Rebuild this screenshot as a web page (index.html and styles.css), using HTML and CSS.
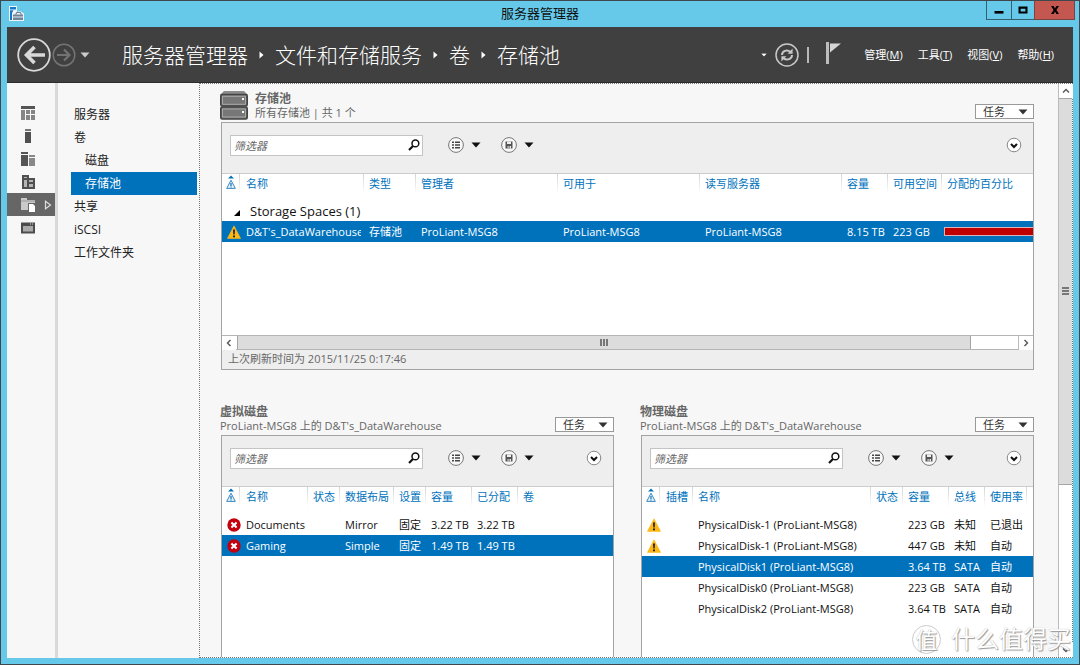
FILE: index.html
```html
<!DOCTYPE html>
<html lang="zh-CN">
<head>
<meta charset="utf-8">
<title>服务器管理器</title>
<link rel="stylesheet" href="styles.css">
</head>
<body>
<svg class="defs" aria-hidden="true">
  <symbol id="warn" viewBox="0 0 14 14"><path d="M7 .8 13.6 13.4H.4z" fill="#fdb813" stroke="#fdb813" stroke-width=".6" stroke-linejoin="round"/><path d="M6 4.6h2L7.7 9.6H6.3zM6 10.400h2V12.200H6z" fill="#222"/></symbol>
  <symbol id="error" viewBox="0 0 14 14"><circle cx="7" cy="7" r="6.7" fill="#c4000f"/><path d="M4.4 4.4l5.2 5.2M9.6 4.4L4.4 9.6" stroke="#fff" stroke-width="2.1"/></symbol>
  <symbol id="sortwarn" viewBox="0 0 12 16"><path d="M3 3.4 6 .4l3 3z" fill="#0072bc"/><path d="M6 5.2 10.3 13.4H1.7z" fill="#e8f2fa" stroke="#3b87bf"/><path d="M6 8v3M6 11.6v1" stroke="#0072bc" stroke-width="1.2"/></symbol>
  <symbol id="search" viewBox="0 0 12 12"><circle cx="7.4" cy="4.4" r="3.4" fill="none" stroke="#111" stroke-width="1.5"/><path d="M5 7 1 11" stroke="#111" stroke-width="2.2"/></symbol>
  <symbol id="list" viewBox="0 0 16 16"><circle cx="8" cy="8" r="7.4" fill="#f8f8f8" stroke="#777"/><path d="M4 5.300h2M4 8h2M4 10.700h2M7 5.300h5M7 8h5M7 10.700h5" stroke="#444" stroke-width="1.400"/></symbol>
  <symbol id="save" viewBox="0 0 16 16"><circle cx="8" cy="8" r="7.4" fill="#f8f8f8" stroke="#777"/><path d="M4.5 4.5h7v7h-7z" fill="#555"/><path d="M6 4.5h4v2.6H6zM6.6 9h1v2.5h-1zM8.6 9H10v2.5H8.6z" fill="#eee"/></symbol>
  <symbol id="expand" viewBox="0 0 16 16"><circle cx="8" cy="8" r="6.8" fill="#fff" stroke="#888"/><path d="M5 7l3 3 3-3" fill="none" stroke="#111" stroke-width="2"/></symbol>
  <symbol id="down" viewBox="0 0 10 6"><path d="M.5.5h9L5 5.5z" fill="currentColor"/></symbol>
  <symbol id="chev" viewBox="0 0 8 8"><path d="M5.5 1 2.5 4l3 3" fill="none" stroke="#555" stroke-width="1.4"/></symbol>
</svg>
<div class="window">
  <header class="titlebar">
    <svg class="app-icon" viewBox="0 0 15 15"><path d="M0 0h8v5.500l3-.5 4 2.500V15H0z" fill="#eef6fa"/><path d="M1 1h6v2.400H1zM1 4.300h3.500L3 7v7H1z" fill="#1a78c8"/><path d="M4 8.500h10V14H4z" fill="#71859a"/><path d="M6.500 8.500 8 6.300h3l1.500 2.200" fill="none" stroke="#71859a" stroke-width="1.200"/><path d="M4 11h10" stroke="#dfe6ee"/></svg>
    <h1 class="title">服务器管理器</h1>
    <div class="win-buttons">
      <button class="win-btn" aria-label="最小化"><svg viewBox="0 0 10 10"><path d="M.5 6h9v2.600h-9z"/></svg></button>
      <button class="win-btn max" aria-label="最大化"><svg viewBox="0 0 10 10"><path d="M.5 1.500h9v7h-9zM2.600 3.800v2.600h4.800V3.800z" fill-rule="evenodd"/></svg></button>
      <button class="win-btn close" aria-label="关闭"><svg viewBox="0 0 10 10"><path d="M1 1h2.600L5 3.400 6.400 1H9L6.400 5 9 9H6.400L5 6.600 3.600 9H1l2.600-4z"/></svg></button>
    </div>
  </header>
  <div class="frame">
    <div class="navbar">
      <button class="plain" aria-label="后退"><svg class="back" viewBox="0 0 34 34"><circle cx="17" cy="17" r="15.800" fill="none" stroke="#d8d8d8" stroke-width="1.800"/><path d="M28 17H9M17.500 9 9.500 17l8 8" fill="none" stroke="#d8d8d8" stroke-width="3.600"/></svg></button>
      <button class="plain" aria-label="前进"><svg class="forward" viewBox="0 0 24 24"><circle cx="12" cy="12" r="10.800" fill="none" stroke="#737373" stroke-width="1.500"/><path d="M5 12h12M12 6.500l5.500 5.500-5.500 5.500" fill="none" stroke="#737373" stroke-width="2.200"/></svg></button>
      <button class="plain history" aria-label="历史记录"><svg class="tri" viewBox="0 0 10 6"><use href="#down"/></svg></button>
      <nav class="crumbs">
        <a href="#">服务器管理器</a><svg viewBox="0 0 5 8"><path d="M.5.5 4.500 4l-4 3.500z"/></svg><a href="#">文件和存储服务</a><svg viewBox="0 0 5 8"><path d="M.5.5 4.500 4l-4 3.500z"/></svg><a href="#">卷</a><svg viewBox="0 0 5 8"><path d="M.5.5 4.500 4l-4 3.500z"/></svg><a href="#">存储池</a>
      </nav>
      <div class="actions">
        <button class="plain" aria-label="更多"><svg class="tri-small" viewBox="0 0 10 6"><use href="#down"/></svg></button>
        <button class="plain" aria-label="刷新"><svg class="refresh" viewBox="0 0 24 24"><circle cx="12" cy="12" r="11" fill="none" stroke="#c8c8c8" stroke-width="1.500"/><path d="M7 12c0-4 5-6 8.500-3.200M17 12c0 4-5 6-8.500 3.200" fill="none" stroke="#c8c8c8" stroke-width="2"/><path d="M17.600 5.500v5.300h-5zM6.400 18.500v-5.300h5z" fill="#c8c8c8"/></svg></button>
        <span class="bar"></span>
        <button class="plain" aria-label="通知"><svg class="flag" viewBox="0 0 16 22"><path d="M1 0h3v22H1z" fill="#bdbdbd"/><path d="M5 1.500h11L5 10.500z" fill="#d5d5d5"/></svg></button>
      </div>
      <div class="menus">
        <button class="plain menu">管理(<u>M</u>)</button>
        <button class="plain menu">工具(<u>T</u>)</button>
        <button class="plain menu">视图(<u>V</u>)</button>
        <button class="plain menu">帮助(<u>H</u>)</button>
      </div>
    </div>
    <div class="body">
      <nav class="rail" aria-label="服务器角色">
        <a href="#" aria-label="仪表板"><svg viewBox="0 0 16 16"><path d="M1 1h14v3H1z" fill="#555"/><path d="M1 5h4v10H1zM6 5h4v4H6zM11 5h4v4h-4zM6 10h4v5H6zM11 10h4v5h-4z" fill="#858585"/></svg></a>
        <a href="#" aria-label="本地服务器"><svg viewBox="0 0 16 16"><path d="M5 1h6v2H5z" fill="#777"/><path d="M5 4h6v11H5z" fill="#505050"/></svg></a>
        <a href="#" aria-label="所有服务器"><svg viewBox="0 0 16 16"><path d="M1 1h7v2H1zM1 4h7v11H1z" fill="#555"/><path d="M9 4h6v2H9zM9 7h6v8H9z" fill="#888"/></svg></a>
        <a href="#" aria-label="AD DS"><svg viewBox="0 0 16 16"><path d="M2 1h7v3h6v11H2z" fill="#505050"/><path d="M4 3h3v1H4zM4 6h3v7H4zM9 6h4v2H9zM9 10h4v3H9z" fill="#b5b5b5"/></svg></a>
        <a href="#" class="on" aria-label="文件和存储服务"><svg viewBox="0 0 16 16"><path d="M1 1h6v2h8v3H8v7H1z" fill="#c9c9c9"/><path d="M1 4h14" stroke="#999"/><path d="M9 7h4l2 2v6H9z" fill="#fff"/></svg><svg class="rail-arrow" viewBox="0 0 8 10"><path d="M1.500 1.200 6.500 5l-5 3.800z" fill="none" stroke="#ddd" stroke-width="1.200"/></svg></a>
        <a href="#" aria-label="远程服务"><svg viewBox="0 0 16 16"><path d="M1 2.500h14v11H1z" fill="#4c4c4c"/><path d="M3 6h10v5.500H3z" fill="#aaa"/><path d="M10 4h1M12 4h1" stroke="#ddd"/></svg></a>
      </nav>
      <nav class="side">
        <a href="#">服务器</a>
        <a href="#">卷</a>
        <a href="#" class="sub">磁盘</a>
        <a href="#" class="sub current">存储池</a>
        <a href="#">共享</a>
        <a href="#">iSCSI</a>
        <a href="#">工作文件夹</a>
      </nav>
      <main class="main">
        <div class="tiles">
          <section class="tile wide">
            <div class="tile-head">
              <svg class="pool-icon" viewBox="0 0 28 29"><path d="M4 0h20l4 4H0z" fill="#8c8c8c"/><rect x=".8" y="3.500" width="26.400" height="11.500" rx="1.500" fill="#777" stroke="#444" stroke-width="1.600"/><rect x=".8" y="16" width="26.400" height="12" rx="1.500" fill="#777" stroke="#444" stroke-width="1.600"/><path d="M2.500 5.300h23v8h-23zM2.500 18h23v8h-23z" fill="none" stroke="#a8a8a8"/><path d="M22 7h2v2h-2zM22 20h2v2h-2z" fill="#fff"/></svg>
              <div class="tile-title"><h2>存储池</h2><p>所有存储池 | 共 1 个</p></div>
              <button class="tasks">任务<svg viewBox="0 0 10 6"><use href="#down"/></svg></button>
            </div>
            <div class="panel">
              <div class="tools">
                <label class="filter"><input type="text" placeholder="筛选器" aria-label="筛选器"><svg><use href="#search"/></svg></label>
                <button class="plain tool" aria-label="条件"><svg class="round"><use href="#list"/></svg><svg class="dd"><use href="#down"/></svg></button>
                <button class="plain tool" aria-label="保存查询"><svg class="round"><use href="#save"/></svg><svg class="dd"><use href="#down"/></svg></button>
                <button class="plain expand" aria-label="展开"><svg class="round"><use href="#expand"/></svg></button>
              </div>
              <div class="grid-area pools">
                <table>
                  <colgroup><col class="w18"><col class="w124"><col class="w52"><col class="w142"><col class="w142"><col class="w142"><col class="w46"><col class="w54"><col></colgroup>
                  <thead><tr><th class="ic"><svg class="sort"><use href="#sortwarn"/></svg></th><th>名称</th><th>类型</th><th>管理者</th><th>可用于</th><th>读写服务器</th><th>容量</th><th>可用空间</th><th>分配的百分比</th></tr></thead>
                  <tbody>
                    <tr class="group"><td colspan="9"><svg viewBox="0 0 6 6"><path d="M6 0v6H0z"/></svg>Storage Spaces (1)</td></tr>
                    <tr class="sel"><td class="ic"><svg><use href="#warn"/></svg></td><td><div class="clip">D&amp;T's_DataWarehouse</div></td><td>存储池</td><td>ProLiant-MSG8</td><td>ProLiant-MSG8</td><td>ProLiant-MSG8</td><td>8.15 TB</td><td>223 GB</td><td class="meter-cell"><div class="meter"></div></td></tr>
                  </tbody>
                </table>
              </div>
              <div class="hscroll"><span class="arrow"><svg viewBox="0 0 8 8"><use href="#chev"/></svg></span><div class="htrack"><div class="hthumb"><i></i><i></i><i></i></div></div><span class="arrow right"><svg viewBox="0 0 8 8"><use href="#chev"/></svg></span></div>
              <p class="status">上次刷新时间为 2015/11/25 0:17:46</p>
            </div>
          </section>
          <section class="tile">
            <div class="tile-head">
              <div class="tile-title"><h2>虚拟磁盘</h2><p>ProLiant-MSG8 上的 D&amp;T's_DataWarehouse</p></div>
              <button class="tasks">任务<svg viewBox="0 0 10 6"><use href="#down"/></svg></button>
            </div>
            <div class="panel">
              <div class="tools">
                <label class="filter"><input type="text" placeholder="筛选器" aria-label="筛选器"><svg><use href="#search"/></svg></label>
                <button class="plain tool" aria-label="条件"><svg class="round"><use href="#list"/></svg><svg class="dd"><use href="#down"/></svg></button>
                <button class="plain tool" aria-label="保存查询"><svg class="round"><use href="#save"/></svg><svg class="dd"><use href="#down"/></svg></button>
                <button class="plain expand" aria-label="展开"><svg class="round"><use href="#expand"/></svg></button>
              </div>
              <div class="grid-area">
                <table>
                  <colgroup><col class="w18"><col class="w68"><col class="w32"><col class="w54"><col class="w32"><col class="w46"><col class="w46"><col></colgroup>
                  <thead><tr><th class="ic"><svg class="sort"><use href="#sortwarn"/></svg></th><th>名称</th><th>状态</th><th>数据布局</th><th>设置</th><th>容量</th><th>已分配</th><th>卷</th></tr></thead>
                  <tbody>
                    <tr><td class="ic"><svg><use href="#error"/></svg></td><td>Documents</td><td></td><td>Mirror</td><td>固定</td><td>3.22 TB</td><td>3.22 TB</td><td></td></tr>
                    <tr class="sel"><td class="ic"><svg><use href="#error"/></svg></td><td>Gaming</td><td></td><td>Simple</td><td>固定</td><td>1.49 TB</td><td>1.49 TB</td><td></td></tr>
                  </tbody>
                </table>
              </div>
            </div>
          </section>
          <section class="tile">
            <div class="tile-head">
              <div class="tile-title"><h2>物理磁盘</h2><p>ProLiant-MSG8 上的 D&amp;T's_DataWarehouse</p></div>
              <button class="tasks">任务<svg viewBox="0 0 10 6"><use href="#down"/></svg></button>
            </div>
            <div class="panel">
              <div class="tools">
                <label class="filter"><input type="text" placeholder="筛选器" aria-label="筛选器"><svg><use href="#search"/></svg></label>
                <button class="plain tool" aria-label="条件"><svg class="round"><use href="#list"/></svg><svg class="dd"><use href="#down"/></svg></button>
                <button class="plain tool" aria-label="保存查询"><svg class="round"><use href="#save"/></svg><svg class="dd"><use href="#down"/></svg></button>
                <button class="plain expand" aria-label="展开"><svg class="round"><use href="#expand"/></svg></button>
              </div>
              <div class="grid-area">
                <table>
                  <colgroup><col class="w18"><col class="w33"><col class="w178"><col class="w32"><col class="w46"><col class="w36"><col class="w42"><col></colgroup>
                  <thead><tr><th class="ic"><svg class="sort"><use href="#sortwarn"/></svg></th><th>插槽</th><th>名称</th><th>状态</th><th>容量</th><th>总线</th><th>使用率</th><th></th></tr></thead>
                  <tbody>
                    <tr><td class="ic"><svg><use href="#warn"/></svg></td><td></td><td>PhysicalDisk-1 (ProLiant-MSG8)</td><td></td><td>223 GB</td><td>未知</td><td>已退出</td><td></td></tr>
                    <tr><td class="ic"><svg><use href="#warn"/></svg></td><td></td><td>PhysicalDisk-1 (ProLiant-MSG8)</td><td></td><td>447 GB</td><td>未知</td><td>自动</td><td></td></tr>
                    <tr class="sel"><td></td><td></td><td>PhysicalDisk1 (ProLiant-MSG8)</td><td></td><td>3.64 TB</td><td>SATA</td><td>自动</td><td></td></tr>
                    <tr><td></td><td></td><td>PhysicalDisk0 (ProLiant-MSG8)</td><td></td><td>223 GB</td><td>SATA</td><td>自动</td><td></td></tr>
                    <tr><td></td><td></td><td>PhysicalDisk2 (ProLiant-MSG8)</td><td></td><td>3.64 TB</td><td>SATA</td><td>自动</td><td></td></tr>
                  </tbody>
                </table>
              </div>
            </div>
          </section>
        </div>
        <div class="vscroll"><span class="arrow up"><svg viewBox="0 0 8 8"><use href="#chev"/></svg></span><div class="vtrack"><div class="vthumb"><i></i><i></i><i></i></div></div><span class="arrow dn"><svg viewBox="0 0 8 8"><use href="#chev"/></svg></span></div>
      </main>
    </div>
  </div>
  <div class="watermark"><span class="seal">值</span><span>什么值得买</span></div>
</div>
</body>
</html>
```
FILE: styles.css
```css
* { box-sizing: border-box; }
body {
  margin: 0;
  font: 11px/15px "Open Sans", "Noto Sans CJK SC", sans-serif;
  color: #111;
}
h1, h2, p { margin: 0; }
a { color: inherit; text-decoration: none; }
button, input { font: inherit; color: inherit; }
svg { display: block; flex: none; }
.defs { position: absolute; width: 0; height: 0; }
.plain { border: 0; background: none; padding: 0; display: flex; align-items: center; }

.window {
  position: relative;
  display: flex;
  flex-direction: column;
  height: 100vh;
  padding: 0 6px 6px;
  background: #66c9ea;
  border: 1px solid #40484e;
  overflow: hidden;
}
.titlebar {
  display: grid;
  grid-template-columns: 1fr auto 1fr;
  height: 26px;
  flex: none;
}
.app-icon { width: 15px; height: 15px; margin: 5px 0 0 2px; }
.title { font-size: 13px; line-height: 25px; font-weight: 400; }
.win-buttons { display: flex; justify-self: end; height: 19px; margin-right: -2px; }
.win-btn {
  display: grid;
  place-items: center;
  width: 25px;
  padding: 0;
  border: 1px solid #35606f;
  border-width: 0 0 1px 1px;
  background: none;
}
.win-btn svg { width: 10px; height: 10px; }
.win-btn.max { width: 23px; }
.win-btn.close { width: 41px; background: #c45850; border-color: #7c4340; border-right-width: 1px; }

.frame { flex: 1; min-height: 0; display: flex; flex-direction: column; background: #f7f7f7; }
.navbar {
  flex: none;
  display: flex;
  align-items: center;
  height: 56px;
  padding: 0 19px 0 10px;
  background: #404040;
  border-bottom: 1px solid #2c2c2c;
  color: #fff;
}
.back { width: 34px; height: 34px; }
.forward { width: 24px; height: 24px; margin-left: 1px; }
.history { margin-left: 4px; color: #ccc; }
.tri { width: 10px; height: 6px; }
.crumbs { display: flex; align-items: center; gap: 11px; margin-left: 32px; font-size: 21px; line-height: 30px; font-weight: 300; white-space: nowrap; }
.crumbs svg { width: 5px; height: 8px; fill: #fff; }
.actions { display: flex; align-items: center; margin-left: auto; gap: 8px; }
.tri-small { width: 6px; height: 4px; }
.refresh { width: 24px; height: 24px; }
.bar { width: 2px; height: 16px; background: #b8b8b8; }
.flag { width: 16px; height: 22px; margin: 0 0 4px 8px; }
.menus { display: flex; gap: 15px; margin-left: 23px; line-height: 18px; }

.body { flex: 1; min-height: 0; display: flex; }
.rail { width: 51px; border-right: 3px solid #d9d9d9; padding-top: 18px; flex: none; }
.rail a { display: flex; align-items: center; height: 23px; padding-left: 13px; }
.rail svg { width: 16px; height: 16px; }
.rail .on { background: #666; }
.rail svg.rail-arrow { width: 8px; height: 10px; margin-left: 8px; }
.side { width: 141px; flex: none; padding: 20px 2px 0 13px; font-size: 12px; line-height: 23px; color: #222; }
.side a { display: block; padding-left: 3px; }
.side a.sub { padding-left: 14px; }
.side a.current { background: #0072bc; color: #fff; }

.main { flex: 1; min-width: 0; display: flex; border: 1px dotted #777; }
.tiles {
  flex: 1;
  min-width: 0;
  display: grid;
  grid-template-columns: 1fr 1fr;
  grid-template-rows: auto 1fr;
  gap: 33px 27px;
  padding: 6px 24px 0 21px;
  overflow: hidden;
}
.tile { display: flex; flex-direction: column; min-width: 0; min-height: 0; }
.wide { grid-column: 1 / -1; }
.tile-head { display: flex; align-items: flex-end; min-height: 32px; gap: 7px; color: #666; margin-left: -1px; }
.pool-icon { width: 28px; height: 29px; margin-bottom: 2px; }
.tile-title { flex: 1; min-width: 0; padding-bottom: 2px; line-height: 14px; white-space: nowrap; }
.tile-title h2 { font-size: 12px; font-weight: 700; line-height: 14px; }
.tasks {
  display: flex;
  align-items: center;
  justify-content: space-between;
  width: 59px;
  height: 15px;
  margin-bottom: 3px;
  padding: 0 5px 0 7px;
  border: 1px solid #999;
  background: #fff;
  color: #333;
  line-height: 13px;
}
.tasks svg { width: 10px; height: 6px; }

.panel { flex: 1; display: flex; flex-direction: column; min-height: 0; background: #fff; border: 1px solid #a3a3a3; }
.tile:not(.wide) .panel { border-bottom: 0; }
.tools { display: flex; align-items: center; height: 51px; flex: none; padding: 0 11px 6px 8px; background: #eee; border-bottom: 1px solid #ccc; }
.filter { display: flex; align-items: center; width: 193px; height: 21px; border: 1px solid #c4c4c4; background: #fff; padding-right: 2px; }
.filter input { flex: 1; min-width: 0; height: 19px; border: 0; padding: 0 3px; background: none; outline: 0; font-style: italic; }
.filter input::placeholder { color: #666; opacity: 1; }
.filter svg { width: 12px; height: 12px; }
.tool { gap: 7px; margin-left: 20px; }
.filter + .tool { margin-left: 25px; }
.round { width: 16px; height: 16px; }
.dd { width: 10px; height: 6px; color: #111; }
.expand { margin-left: auto; }

.grid-area { flex: 1; min-height: 0; overflow: hidden; }
.pools { flex: none; height: 161px; }
table { width: 100%; table-layout: fixed; border-collapse: collapse; }
th, td { padding: 0 0 0 5px; text-align: left; font-weight: 400; white-space: nowrap; overflow: hidden; }
th {
  height: 27px;
  padding-top: 2px;
  vertical-align: top;
  color: #0072bc;
  background: linear-gradient(#d4d4d4, #fff) right top / 1px 20px no-repeat;
}
th:last-child { background: none; }
td { height: 21px; }
.clip { margin-right: 3px; overflow: hidden; }
.sel { background: #0072bc; color: #fff; }
.ic { padding: 0; overflow: visible; }
.ic svg { width: 14px; height: 14px; margin-left: 5px; }
.ic svg.sort { width: 12px; height: 16px; margin-left: 3px; }
th.ic { padding-top: 1px; }
td.ic + td, th.ic + th { padding-left: 6px; }
.group td { height: 20px; font-size: 13px; padding-left: 12px; }
.group svg { display: inline-block; width: 6px; height: 6px; margin-right: 10px; }
.meter-cell { padding-left: 2px; }
.meter { height: 9px; background: #c00000; border: 1px solid #d9b3b9; border-right: 0; }
.w18 { width: 18px; } .w32 { width: 32px; } .w33 { width: 33px; } .w36 { width: 36px; } .w42 { width: 42px; }
.w46 { width: 46px; } .w52 { width: 52px; } .w54 { width: 54px; } .w68 { width: 68px; }
.w124 { width: 124px; } .w142 { width: 142px; } .w178 { width: 178px; }

.arrow { display: grid; place-items: center; width: 14px; height: 14px; background: #fff; flex: none; }
.arrow svg { width: 8px; height: 8px; }
.right svg { transform: rotate(180deg); }
.up svg { transform: rotate(90deg); }
.dn svg { transform: rotate(-90deg); }
.hscroll { display: flex; height: 15px; border: 1px solid #b5b5b5; border-width: 1px 0; }
.htrack { flex: 1; background: #fff; border-right: 1px solid #bbb; padding-left: 1px; }
.hthumb { width: 94%; height: 13px; display: flex; align-items: center; justify-content: center; gap: 1px; background: #dcdcdc; border: 1px solid #a5a5a5; border-width: 0 1px; }
.hthumb i { width: 2px; height: 7px; background: #777; }
.status { height: 19px; padding-left: 6px; line-height: 18px; background: #eee; color: #666; }
.vscroll { width: 14px; display: flex; flex-direction: column; border-left: 1px solid #bbb; background: #fff; }
.vtrack { flex: 1; }
.vthumb { height: 71%; display: flex; flex-direction: column; align-items: center; justify-content: center; gap: 1px; background: #dcdcdc; border: 1px solid #a5a5a5; border-width: 1px 0; }
.vthumb i { width: 7px; height: 2px; background: #777; }

.watermark {
  position: absolute;
  right: 8px;
  bottom: 8px;
  display: flex;
  align-items: center;
  gap: 10px;
  font-size: 24px;
  line-height: 34px;
  color: #fff;
  text-shadow: 1px 1px 1px #999, 0 0 1px #aaa;
  pointer-events: none;
}
.seal { display: flex; align-items: center; justify-content: center; width: 29px; height: 29px; border: 1px solid #ccc; border-radius: 50%; font-size: 22px; line-height: 24px; }
```
